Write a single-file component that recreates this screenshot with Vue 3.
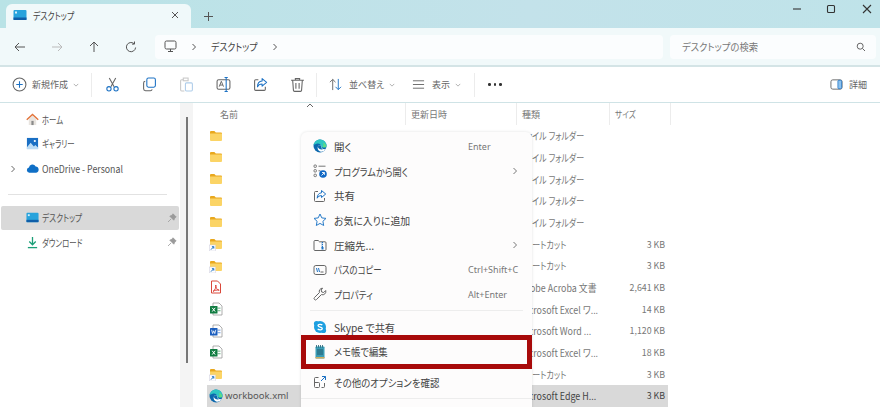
<script setup>
const sideTop = [
  { id: 'home', label: 'ホーム', sx: 0.74 },
  { id: 'gallery', label: 'ギャラリー', sx: 0.74 },
  { id: 'cloud', label: 'OneDrive - Personal', sx: 0.88, expand: true },
]
const sidePinned = [
  { id: 'desk', label: 'デスクトップ', sx: 0.77, active: true },
  { id: 'down', label: 'ダウンロード', sx: 0.74 },
]
const folderType = 'ファイル フォルダー'
const linkType = 'ショートカット'
const files = [
  { icon: 'folder', type: folderType },
  { icon: 'folder', type: folderType },
  { icon: 'folder', type: folderType },
  { icon: 'folder', type: folderType },
  { icon: 'folder', type: folderType },
  { icon: 'link', type: linkType, size: '3 KB' },
  { icon: 'link', type: linkType, size: '3 KB' },
  { icon: 'pdf', type: 'Adobe Acroba 文書', size: '2,641 KB', latin: true },
  { icon: 'xls', type: 'Microsoft Excel ワ...', size: '14 KB', latin: true },
  { icon: 'doc', type: 'Microsoft Word ...', size: '1,120 KB', latin: true },
  { icon: 'xls', type: 'Microsoft Excel ワ...', size: '18 KB', latin: true },
  { icon: 'link', type: linkType, size: '3 KB' },
  { icon: 'edge', name: 'workbook.xml', type: 'Microsoft Edge H...', size: '3 KB', selected: true, latin: true },
]
const menu = [
  { icon: 'edge', label: '開く', sx: 1, hint: 'Enter' },
  { icon: 'openwith', label: 'プログラムから開く', sx: 0.87, more: true },
  { icon: 'share', label: '共有', sx: 1 },
  { icon: 'star', label: 'お気に入りに追加', sx: 0.94 },
  { icon: 'zip', label: '圧縮先...', sx: 1, more: true },
  { icon: 'path', label: 'パスのコピー', sx: 0.8, hint: 'Ctrl+Shift+C' },
  { icon: 'wrench', label: 'プロパティ', sx: 0.83, hint: 'Alt+Enter' },
  { sep: true },
  { icon: 'skype', label: 'Skype で共有', sx: 0.97 },
  { icon: 'note', label: 'メモ帳で編集', sx: 0.89, mark: true },
  { icon: 'moreopt', label: 'その他のオプションを確認', sx: 0.9, gap: true },
]
const squeeze = (sx) => ({ transform: `scaleX(${sx})` })
</script>

<template>
  <div class="app">
    <svg class="defs" aria-hidden="true">
      <symbol id="folder" viewBox="0 0 14 14">
        <path d="M1 3a1 1 0 0 1 1-1h3.400l1.400 1.400H12a1 1 0 0 1 1 1V5H1z" fill="#e9a81e" />
        <path d="M1 4.600h12v6.400a1 1 0 0 1-1 1H2a1 1 0 0 1-1-1z" fill="#fbd466" />
      </symbol>
      <symbol id="link" viewBox="0 0 14 14">
        <path d="M1 3a1 1 0 0 1 1-1h3.400l1.400 1.400H12a1 1 0 0 1 1 1V5H1z" fill="#e9a81e" />
        <path d="M1 4.600h12v6.400a1 1 0 0 1-1 1H2a1 1 0 0 1-1-1z" fill="#fbd466" />
        <rect x="0.500" y="8" width="6" height="6" fill="#fff" stroke="#ccd" stroke-width=".5" />
        <path d="M2 12.600l2.600-2.800M2.900 9.700h1.900v1.900" fill="none" stroke="#1a6fc4" stroke-width="1" />
      </symbol>
      <symbol id="pdf" viewBox="0 0 14 14">
        <path d="M2.500 1h6l3 3v9h-9z" fill="#fff" stroke="#d9483b" />
        <path d="M4 11.400c2-1 3.200-4.200 2.800-6.400-.4 2.600 1.400 5 3.400 5.200-2.200-.4-4.600 0-6.200 1.200z" fill="none" stroke="#d9362b" stroke-width=".9" />
      </symbol>
      <symbol id="xls" viewBox="0 0 14 14">
        <path d="M4 1h6l3 3v9H4z" fill="#fff" stroke="#999" stroke-width=".8" />
        <rect x="8.500" y="5.500" width="3" height="1.300" fill="#8cc5a2" />
        <rect x="8.500" y="8" width="3" height="1.300" fill="#8cc5a2" />
        <rect x="1" y="4" width="7.500" height="7.500" rx=".6" fill="#107c41" />
        <path d="M3.200 5.800l3 3.800M6.200 5.800l-3 3.800" stroke="#fff" stroke-width="1" />
      </symbol>
      <symbol id="doc" viewBox="0 0 14 14">
        <path d="M4 1h6l3 3v9H4z" fill="#fff" stroke="#999" stroke-width=".8" />
        <rect x="8.500" y="5.500" width="3" height="1.300" fill="#8fb2e6" />
        <rect x="8.500" y="8" width="3" height="1.300" fill="#8fb2e6" />
        <rect x="1" y="4" width="7.500" height="7.500" rx=".6" fill="#1b5ebe" />
        <path d="M2.600 5.800l1 3.800 1.100-2.800 1.100 2.800 1-3.800" fill="none" stroke="#fff" stroke-width=".8" />
      </symbol>
      <symbol id="edge" viewBox="0 0 14 14">
        <circle cx="7" cy="7" r="6.500" fill="#0c68ad" />
        <path d="M.6 6C1.400 2.600 4 .5 7 .5c3.600 0 6.500 2.800 6.500 6 0 .6-.1 1.300-.5 1.800-2 .6-5 .4-5-1 0-1.800-1.500-3-3.500-2.800C3 4.700 1.700 5.500.6 6z" fill="#2fc6c2" />
        <path d="M8.200 6.400C8 9 9.600 10.600 12.600 10.200 11.800 11.900 9.800 12.800 8 12.700 5.500 12.500 4.200 10 4.800 7.800 5.200 6.400 7.800 5.600 8.200 6.400z" fill="#fff" />
        <path d="M4.800 7.800c.5-1.300 1.800-2 3.400-1.400-.4 1.800.3 3.200 1.600 3.900-2 .6-4.400-.4-5-2.500z" fill="#0c68ad" />
        <path d="M10 3.500c2 .8 3.200 2.400 3.300 4.400-.9.500-2.600.6-3.800.2C10.600 7 10.800 5 10 3.500z" fill="#5fdc84" />
      </symbol>
      <symbol id="openwith" viewBox="0 0 14 14">
        <g fill="none" stroke="#666" stroke-width=".9">
          <rect x="1" y="1" width="2.400" height="2.400" rx=".8" />
          <rect x="1" y="5.600" width="2.400" height="2.400" rx=".8" />
          <rect x="1" y="10.200" width="2.400" height="2.400" rx=".8" />
          <path d="M5.500 2.200h7M5.500 6.800h2" />
        </g>
        <circle cx="10" cy="10" r="3.800" fill="#1168c4" />
        <path d="M8.500 11.500l2.800-2.800M9 8.500h2.400v2.400" fill="none" stroke="#fff" stroke-width=".9" />
      </symbol>
      <symbol id="share" viewBox="0 0 14 14">
        <path d="M5 2.500H2.500a1 1 0 0 0-1 1v8a1 1 0 0 0 1 1h8a1 1 0 0 0 1-1V9" fill="none" stroke="#666" />
        <path d="M8.500 1.500L12.700 5 8.500 8.500V6.600C6.500 6.600 5 7.500 4.200 9.200c0-3.200 1.800-5.200 4.300-5.400z" fill="none" stroke="#1d72c4" stroke-linejoin="round" />
      </symbol>
      <symbol id="star" viewBox="0 0 14 14">
        <path d="M7 1l1.800 3.900 4.200.5-3.100 2.900.8 4.200L7 10.400l-3.700 2.100.8-4.200L1 5.400l4.200-.5z" fill="none" stroke="#2a7cc9" stroke-linejoin="round" />
      </symbol>
      <symbol id="zip" viewBox="0 0 14 14">
        <path d="M1 3.500a1 1 0 0 1 1-1h3.200l1.300 1.300H12a1 1 0 0 1 1 1v6.700a1 1 0 0 1-1 1H2a1 1 0 0 1-1-1z" fill="none" stroke="#666" />
        <path d="M9.500 4v1h-1M9.500 6v1h-1M9.500 8v1h-1" fill="none" stroke="#1d72c4" />
        <rect x="8.500" y="9" width="2" height="2.500" fill="#1d72c4" />
      </symbol>
      <symbol id="path" viewBox="0 0 14 14">
        <rect x="1" y="2.500" width="12" height="9" rx="1.800" fill="none" stroke="#666" />
        <path d="M3.500 5l1 4M5.500 5l1 4" stroke="#1d72c4" />
        <path d="M7.500 9h3" stroke="#666" />
      </symbol>
      <symbol id="wrench" viewBox="0 0 14 14">
        <path d="M9.600 1.200a3.300 3.300 0 0 0-3.200 4.400L1.500 10.500a1.400 1.400 0 0 0 2 2l4.900-4.900a3.300 3.300 0 0 0 4.300-4.100l-2 2-2-.5-.5-2z" fill="none" stroke="#666" stroke-linejoin="round" />
      </symbol>
      <symbol id="skype" viewBox="0 0 14 14">
        <circle cx="7" cy="7" r="6" fill="#1d9fe0" />
        <circle cx="3.500" cy="3.500" r="2.600" fill="#1d9fe0" />
        <circle cx="10.500" cy="10.500" r="2.600" fill="#1d9fe0" />
        <path d="M9.300 5.100C8.500 4 5 3.900 5 5.600c0 1.900 4.300 1 4.300 2.900 0 1.700-3.500 1.600-4.600.3" fill="none" stroke="#fff" stroke-width="1.300" />
      </symbol>
      <symbol id="note" viewBox="0 0 14 14">
        <rect x="2.500" y="1.500" width="9" height="12" rx=".8" fill="#3a9cb5" />
        <rect x="2.500" y="12" width="9" height="1.500" fill="#d0ac5e" />
        <path d="M3.500 0v2.500M5.500 0v2.500M7.500 0v2.500M9.500 0v2.500" stroke="#1a5c70" stroke-width=".8" />
        <path d="M4 5h6M4 7h6M4 9h6" stroke="#173f4f" stroke-width=".7" />
      </symbol>
      <symbol id="moreopt" viewBox="0 0 14 14">
        <path d="M5.500 2.500H2.500a1 1 0 0 0-1 1v8a1 1 0 0 0 1 1h3a1 1 0 0 0 1-1V8.500a1 1 0 0 0-1-1H1.500M11.500 8v3.500a1 1 0 0 1-1 1H8.500" fill="none" stroke="#666" />
        <path d="M8 6l4.500-4.500M9 1.500h3.500V5" fill="none" stroke="#1d72c4" />
      </symbol>
      <symbol id="desk" viewBox="0 0 14 14">
        <rect x=".5" y="2" width="13" height="10" rx="1" fill="#27a3dc" />
        <rect x=".5" y="9.500" width="13" height="2.500" fill="#0f5ea8" />
        <rect x="2" y="3.500" width="2" height="2" fill="#d6f1fb" />
      </symbol>
      <symbol id="home" viewBox="0 0 14 14">
        <path d="M3 6.500V13h8V6.500L7 3z" fill="#e8e4df" />
        <rect x="5.800" y="8.500" width="2.400" height="4.500" fill="#8a8a8a" />
        <path d="M.8 7.200L7 1.600l6.200 5.600" fill="none" stroke="#e2733a" stroke-width="1.500" />
      </symbol>
      <symbol id="gallery" viewBox="0 0 14 14">
        <rect x="1" y="1" width="12" height="12" fill="#1a6fc4" />
        <circle cx="9.500" cy="4.300" r="1.200" fill="#fff" />
        <path d="M1 11l4-4.800 3.500 4 1.500-1.500 3 2.500V13H1z" fill="#bcdcf5" />
      </symbol>
      <symbol id="cloud" viewBox="0 0 14 14">
        <path d="M3.600 11.500a2.900 2.900 0 0 1-.5-5.700 3.900 3.900 0 0 1 7.300-1 3.400 3.400 0 0 1 .6 6.700z" fill="#0f6fc6" />
      </symbol>
      <symbol id="down" viewBox="0 0 14 14">
        <path d="M7 1v8M3.500 6L7 9.500 10.500 6" fill="none" stroke="#1b9e77" stroke-width="1.400" />
        <path d="M2 12.500h10" stroke="#1b9e77" stroke-width="1.400" />
      </symbol>
      <symbol id="pin" viewBox="0 0 10 10">
        <path d="M6 .8L9.200 4 8 4.600 6.800 7.200 2.800 3.200 5.400 2zM4 6L1 9" fill="#9a9a9a" stroke="#9a9a9a" stroke-width=".8" />
      </symbol>
    </svg>

    <header class="titlebar">
      <div class="tab">
        <svg class="ic14"><use href="#desk" /></svg>
        <span class="tab-label"><span class="sq" :style="squeeze(0.79)">デスクトップ</span></span>
        <svg class="tab-x" viewBox="0 0 8 8"><path d="M1 1l6 6M7 1L1 7" /></svg>
      </div>
      <svg class="plus" viewBox="0 0 9 9"><path d="M4.500 0v9M0 4.500h9" /></svg>
      <div class="winctl">
        <svg viewBox="0 0 10 10"><path d="M1 5h8" /></svg>
        <svg viewBox="0 0 10 10"><rect x="1.500" y="1.500" width="7" height="7" rx="1" /></svg>
        <svg viewBox="0 0 10 10"><path d="M1 1l8 8M9 1l-8 8" /></svg>
      </div>
    </header>

    <nav class="navbar">
      <div class="navbtns">
        <svg viewBox="0 0 12 12" class="nav"><path d="M11 6H1M5 2L1 6l4 4" /></svg>
        <svg viewBox="0 0 12 12" class="nav off"><path d="M1 6h10M7 2l4 4-4 4" /></svg>
        <svg viewBox="0 0 12 12" class="nav"><path d="M6 11V1M2 5l4-4 4 4" /></svg>
        <svg viewBox="0 0 12 12" class="nav"><path d="M10.600 6.500A4.600 4.600 0 1 1 9 2.600M9.500 .5v2.600H7" /></svg>
      </div>
      <div class="address">
        <svg class="pc" viewBox="0 0 13 13"><rect x="1" y="1" width="11" height="8" rx="1.500" /><path d="M4 11.500h5M6.500 9v2.500" /></svg>
        <svg class="chev c1" viewBox="0 0 6 8"><path d="M1.500 1l3 3-3 3" /></svg>
        <span class="addr-text"><span class="sq" :style="squeeze(0.85)">デスクトップ</span></span>
        <svg class="chev c2" viewBox="0 0 6 8"><path d="M1.500 1l3 3-3 3" /></svg>
      </div>
      <div class="search">
        <span class="sq" :style="squeeze(0.93)">デスクトップの検索</span>
        <svg viewBox="0 0 10 10"><circle cx="4.200" cy="4.200" r="3" /><path d="M6.500 6.500L9 9" /></svg>
      </div>
    </nav>

    <div class="cmdbar">
      <div class="cmd new">
        <svg class="ic15" viewBox="0 0 14 14"><circle cx="7" cy="7" r="6" fill="none" stroke="#666" /><path d="M7 4v6M4 7h6" stroke="#1d72c4" /></svg>
        <span>新規作成</span>
        <svg class="caret" viewBox="0 0 8 5"><path d="M1 1l3 3 3-3" /></svg>
      </div>
      <i class="vsep" />
      <div class="tool">
        <svg class="ic15" viewBox="0 0 14 14"><path d="M4 1l4.500 8M10 1L5.500 9" fill="none" stroke="#666" /><circle cx="3.700" cy="11" r="2" fill="none" stroke="#1d72c4" /><circle cx="10.300" cy="11" r="2" fill="none" stroke="#1d72c4" /></svg>
      </div>
      <div class="tool">
        <svg class="ic15" viewBox="0 0 14 14"><rect x="4.500" y="1" width="8" height="8.500" rx="1.500" fill="none" stroke="#1d72c4" /><path d="M3 4A1.800 1.800 0 0 0 1.500 6v5a1.800 1.800 0 0 0 1.800 1.800h4.500A1.800 1.800 0 0 0 9.500 11.500" fill="none" stroke="#666" /></svg>
      </div>
      <div class="tool">
        <svg class="ic15" viewBox="0 0 14 14" opacity=".35"><path d="M4 2.500H2.500a1 1 0 0 0-1 1V12a1 1 0 0 0 1 1H5" fill="none" stroke="#666" /><rect x="4" y="1" width="4.500" height="2.500" fill="none" stroke="#666" /><rect x="6" y="5.500" width="6.500" height="7.500" rx="1" fill="none" stroke="#1d72c4" /></svg>
      </div>
      <div class="tool">
        <svg class="ic15" viewBox="0 0 14 14"><rect x="1" y="2.500" width="12" height="9" rx="1.500" fill="none" stroke="#666" /><path d="M3 9l2-5 2 5M3.700 7.500h2.600" fill="none" stroke="#666" stroke-width=".9" /><path d="M9.500 .5v13M8 .5h3M8 13.500h3" stroke="#1d72c4" fill="none" /></svg>
      </div>
      <div class="tool">
        <svg class="ic15"><use href="#share" /></svg>
      </div>
      <div class="tool">
        <svg class="ic15" viewBox="0 0 14 14"><path d="M1 3h12M5 3V1.500h4V3M2.500 3l.7 9.500a1 1 0 0 0 1 .9h5.600a1 1 0 0 0 1-.9l.7-9.500M5.500 5.500v5.500M8.500 5.500v5.500" fill="none" stroke="#666" /></svg>
      </div>
      <i class="vsep" />
      <div class="cmd sort">
        <svg class="ic13" viewBox="0 0 14 14"><path d="M4 13V1.500M1 4.500l3-3 3 3" fill="none" stroke="#666" /><path d="M10 1v11.500M7 9.500l3 3 3-3" fill="none" stroke="#1d72c4" /></svg>
        <span>並べ替え</span>
        <svg class="caret" viewBox="0 0 8 5"><path d="M1 1l3 3 3-3" /></svg>
      </div>
      <div class="cmd view">
        <svg class="ic13" viewBox="0 0 14 14"><path d="M1 3h12M1 7h12M1 11h12" fill="none" stroke="#666" /></svg>
        <span>表示</span>
        <svg class="caret" viewBox="0 0 8 5"><path d="M1 1l3 3 3-3" /></svg>
      </div>
      <i class="vsep" />
      <div class="dots"><b /><b /><b /></div>
      <div class="details">
        <svg class="ic13" viewBox="0 0 14 14"><rect x="1" y="2" width="12" height="10" rx="2" fill="none" stroke="#666" /><rect x="8.500" y="2.500" width="4" height="9" rx="1" fill="#8cc2ee" stroke="#1d72c4" stroke-width=".8" /></svg>
        <span>詳細</span>
      </div>
    </div>

    <div class="main">
      <aside class="sidebar">
        <div v-for="s in sideTop" :key="s.id" class="side-row">
          <svg v-if="s.expand" class="side-exp" viewBox="0 0 6 8"><path d="M1.500 1l3 3-3 3" /></svg>
          <svg class="ic13"><use :href="'#' + s.id" /></svg>
          <span class="sq" :style="squeeze(s.sx)">{{ s.label }}</span>
        </div>
        <hr class="side-sep" />
        <div v-for="s in sidePinned" :key="s.id" class="side-row" :class="{ active: s.active }">
          <svg class="ic13"><use :href="'#' + s.id" /></svg>
          <span class="sq" :style="squeeze(s.sx)">{{ s.label }}</span>
          <svg class="pin"><use href="#pin" /></svg>
        </div>
      </aside>
      <div class="track"><div class="thumb" /></div>
      <section class="list">
        <div class="head">
          <div class="col c-name">名前<svg class="sortup" viewBox="0 0 8 5"><path d="M1 4l3-3 3 3" /></svg></div>
          <div class="col c-date">更新日時</div>
          <div class="col c-type">種類</div>
          <div class="col c-size"><span class="sq" :style="squeeze(0.85)">サイズ</span></div>
        </div>
        <div v-for="(f, i) in files" :key="i" class="row" :class="{ selected: f.selected }">
          <div class="c-name cell">
            <svg class="ic14"><use :href="'#' + f.icon" /></svg>
            <span v-if="f.name" class="fname">{{ f.name }}</span>
          </div>
          <div class="c-date" />
          <div class="c-type cell"><span class="sq" :style="squeeze(f.latin ? 0.89 : 0.8)">{{ f.type }}</span></div>
          <div class="c-size cell num">{{ f.size }}</div>
        </div>
      </section>
    </div>

    <div class="menu">
      <template v-for="(m, i) in menu" :key="i">
        <hr v-if="m.sep" class="m-sep" />
        <div v-else class="m-item" :class="{ mark: m.mark, gap: m.gap }">
          <svg class="ic14"><use :href="'#' + m.icon" /></svg>
          <span class="sq" :style="squeeze(m.sx)">{{ m.label }}</span>
          <span v-if="m.hint" class="m-hint">{{ m.hint }}</span>
          <svg v-if="m.more" class="m-more" viewBox="0 0 6 8"><path d="M1.500 1l3 3-3 3" /></svg>
        </div>
      </template>
      <hr class="m-sep last" />
    </div>
  </div>
</template>

<style>
html, body { margin: 0; background: #fff; }
</style>

<style scoped>
.app {
  position: relative;
  width: 880px;
  height: 407px;
  overflow: hidden;
  display: flex;
  flex-direction: column;
  background: #fff;
  color: #555;
  font: 10px "Noto Sans CJK JP", "Noto Sans", sans-serif;
  font-feature-settings: "palt";
}
.defs { position: absolute; width: 0; height: 0; }
svg { display: block; flex: none; }
.ic13 { width: 13px; height: 13px; }
.ic14 { width: 14px; height: 14px; }
.ic15 { width: 15px; height: 15px; }
.sq { display: inline-block; white-space: nowrap; transform-origin: left center; }

.titlebar {
  height: 28px;
  flex: none;
  display: flex;
  align-items: flex-end;
  padding-left: 6px;
  background: linear-gradient(90deg, #b9e3e6, #c3e2ea 60%, #bfe3e9);
}
.tab {
  width: 185px;
  height: 24px;
  box-sizing: border-box;
  padding: 0 12px 2px 7px;
  display: flex;
  align-items: center;
  gap: 6px;
  background: #f0f9fa;
  border-radius: 6px 6px 0 0;
}
.tab-label { flex: 1; color: #444; }
.tab-x { width: 8px; height: 8px; fill: none; stroke: #555; }
.plus { width: 9px; height: 9px; margin: 0 0 7px 13px; fill: none; stroke: #555; }
.winctl { margin-left: auto; align-self: flex-start; display: flex; padding: 4px 8px 0 0; }
.winctl svg { width: 10px; height: 10px; fill: none; stroke: #333; stroke-width: 1.100; margin-left: 24px; }
.winctl svg:last-child { margin-left: 26px; }

.navbar {
  height: 37px;
  flex: none;
  display: flex;
  align-items: center;
  background: #f1f9fa;
  border-bottom: 2px solid #d4e4e6;
}
.navbtns { width: 155px; padding-left: 14px; box-sizing: border-box; display: flex; gap: 25px; }
.nav { width: 12px; height: 12px; fill: none; stroke: #555; }
.nav.off { stroke: #bbb; }
.address {
  width: 508px;
  height: 24px;
  box-sizing: border-box;
  padding-left: 9px;
  display: flex;
  align-items: center;
  background: #fbfdfe;
  border-radius: 4px;
}
.pc { width: 13px; height: 13px; fill: none; stroke: #555; }
.chev { width: 6px; height: 8px; fill: none; stroke: #555; }
.c1 { margin: 0 14px 0 14px; }
.c2 { margin-left: 14px; }
.addr-text { width: 47px; font-size: 10.500px; color: #444; }
.search {
  width: 206px;
  height: 24px;
  margin-left: 7px;
  box-sizing: border-box;
  padding: 0 10px 0 12px;
  display: flex;
  align-items: center;
  justify-content: space-between;
  background: #fbfdfe;
  border-radius: 4px;
  color: #777;
}
.search svg { width: 10px; height: 10px; fill: none; stroke: #666; }

.cmdbar {
  height: 35px;
  flex: none;
  display: flex;
  align-items: center;
  padding-left: 12px;
  border-bottom: 1px solid #cfe3e6;
  color: #666;
  font-size: 9px;
}
.cmd { display: flex; align-items: center; }
.cmd span { margin-left: 5px; }
.caret { width: 6px; height: 4px; margin-left: 5px; fill: none; stroke: #999; }
.new { width: 79px; }
.vsep { width: 1px; height: 24px; background: #ececec; flex: none; }
.tool { width: 37px; flex: none; display: flex; justify-content: center; }
.new + .vsep + .tool { margin-left: 2px; }
.sort { margin-left: 12px; width: 83px; }
.sort span { margin-left: 7px; }
.view { width: 62px; }
.view span { margin-left: 7px; }
.dots { display: flex; gap: 3px; margin-left: 13px; }
.dots b { width: 2.500px; height: 2.500px; border-radius: 50%; background: #333; }
.details { margin-left: auto; display: flex; align-items: center; gap: 6px; padding-right: 13px; }

.main { flex: 1; display: flex; min-height: 0; }
.sidebar { width: 180px; flex: none; padding-top: 4px; box-sizing: border-box; }
.side-row {
  position: relative;
  height: 24.500px;
  box-sizing: border-box;
  margin: 0 1px;
  padding-left: 25px;
  display: flex;
  align-items: center;
  gap: 3px;
  border-radius: 2px;
}
.side-row.active { background: #d9d9d9; }
.side-exp { position: absolute; left: 9px; top: 9px; width: 6px; height: 8px; fill: none; stroke: #666; }
.pin { position: absolute; right: 2px; top: 7px; width: 10px; height: 10px; }
.side-sep { height: 1px; margin: 13px 13px 11px 8px; border: 0; background: #e2e2e2; }

.track { width: 13px; flex: none; background: #f4f4f4; padding: 14px 0 0 6px; box-sizing: border-box; }
.thumb { width: 1.500px; height: 246px; background: #777; }

.list { flex: 1; min-width: 0; padding-left: 14px; box-sizing: border-box; }
.head { height: 22px; display: flex; color: #777; font-size: 9px; }
.col { display: flex; align-items: center; height: 22px; box-sizing: border-box; position: relative; }
.c-name { width: 198px; flex: none; }
.c-date { width: 111px; flex: none; }
.c-type { width: 93px; flex: none; }
.c-size { width: 62px; flex: none; }
.head .c-name { padding-left: 13px; }
.head .c-date, .head .c-type, .head .c-size { padding-left: 5px; border-left: 1px solid #ececec; }
.head .c-size { border-right: 1px solid #ececec; }
.sortup { position: absolute; left: 99px; top: 0; width: 8px; height: 5px; fill: none; stroke: #666; }
.row { height: 21.670px; display: flex; align-items: center; color: #777; }
.cell { display: flex; align-items: center; white-space: nowrap; overflow: hidden; }
.c-name.cell { padding-left: 2px; box-sizing: border-box; gap: 2px; }
.c-type.cell { padding-left: 3px; box-sizing: border-box; }
.num { justify-content: flex-end; padding-right: 6px; box-sizing: border-box; font-size: 8.800px; }
.row.selected { background: #d9d9d9; width: 461px; color: #444; }
.fname { color: #555; font-family: "Noto Sans", sans-serif; font-size: 9.500px; }

.menu {
  position: absolute;
  left: 301px;
  top: 132px;
  width: 231px;
  height: 290px;
  box-sizing: border-box;
  padding-top: 2px;
  background: #fdfcfc;
  border-radius: 6px;
  box-shadow: 0 0 3px rgba(0, 0, 0, .12);
  color: #444;
  font-size: 10.500px;
}
.m-item {
  position: relative;
  height: 24.700px;
  padding-left: 12px;
  display: flex;
  align-items: center;
  gap: 7px;
}
.m-hint {
  position: absolute;
  left: 167px;
  font-size: 9px;
  color: #777;
  font-family: "Noto Sans", sans-serif;
}
.m-more { position: absolute; left: 211px; top: 8px; width: 6px; height: 8px; fill: none; stroke: #777; }
.m-sep { height: 1px; margin: 3.500px 9px; border: 0; background: #ededed; }
.m-sep.last { margin: 3px 0 0; }
.m-item.mark { outline: 5px solid #a80a0a; outline-offset: -5px; height: 34px; margin-top: -4.700px; margin-bottom: -3px; z-index: 1; }
.m-item.gap { margin-top: 4px; }
</style>
